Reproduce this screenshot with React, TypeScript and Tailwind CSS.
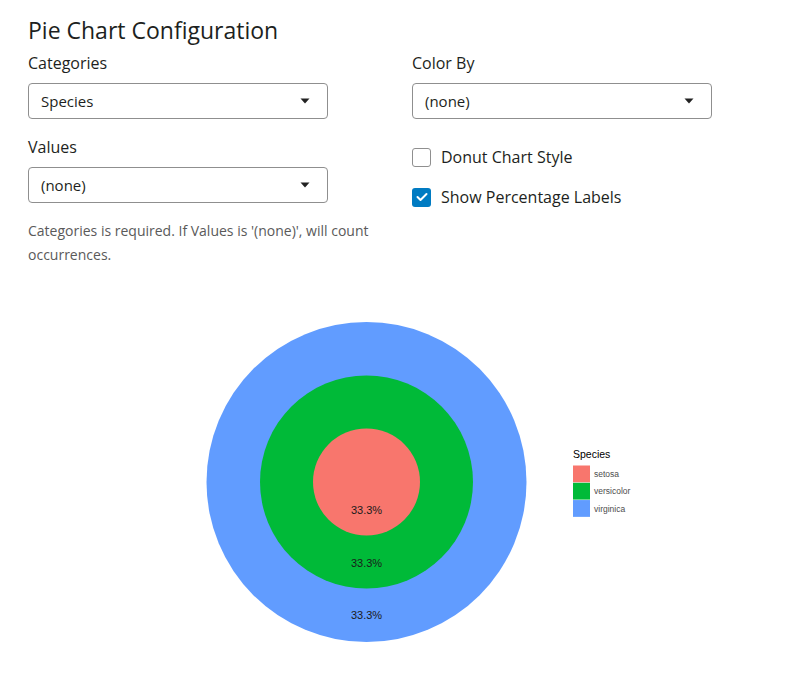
import React from 'react';

const FONT = { fontFamily: '"Open Sans", "Noto Sans", sans-serif' };

const SelectBox = ({ value }: { value: string }) => (
  <div className="w-[300px] h-9 border border-[#8f8f8f] rounded-[4px] bg-white flex items-center justify-between pl-[12px] pr-[17px] text-[15px] text-[#1d1f21]">
    <span>{value}</span>
    <svg width="10" height="6" viewBox="0 0 10 6">
      <path d="M0.5 0.5 L9.5 0.5 L5 5.5 Z" fill="#222" />
    </svg>
  </div>
);

const Field = ({ label, value }: { label: string; value: string }) => (
  <div className="flex flex-col mb-4">
    <label className="text-base leading-6 mb-2">{label}</label>
    <SelectBox value={value} />
  </div>
);

const Check = ({ label, checked }: { label: string; checked?: boolean }) => (
  <div className="flex items-center gap-[10px] h-6 mb-4">
    {checked ? (
      <div className="w-[19px] h-[19px] rounded-[3px] bg-[#007bc2] flex items-center justify-center">
        <svg width="12" height="10" viewBox="0 0 12 10">
          <path d="M1.5 5 L4.5 8 L10.5 2" stroke="white" strokeWidth="2" fill="none" strokeLinecap="round" strokeLinejoin="round" />
        </svg>
      </div>
    ) : (
      <div className="w-[19px] h-[19px] rounded-[3px] border border-[#8f8f8f] bg-white" />
    )}
    <span className="text-base leading-6">{label}</span>
  </div>
);

const PieChart = () => {
  const cx = 338.5;
  const cy = 199;
  const legend = [
    { name: 'setosa', color: '#F8766D' },
    { name: 'versicolor', color: '#00BA38' },
    { name: 'virginica', color: '#619CFF' },
  ];
  return (
    <svg width="744" height="400" viewBox="0 0 744 400" style={{ fontFamily: '"Liberation Sans", Arial, sans-serif' }}>
      <circle cx={cx} cy={cy} r={160} fill="#619CFF" />
      <circle cx={cx} cy={cy} r={106.5} fill="#00BA38" />
      <circle cx={cx} cy={cy} r={53.5} fill="#F8766D" />
      <text x={cx} y={231} textAnchor="middle" fontSize="11" fill="#1a1a1a">33.3%</text>
      <text x={cx} y={283.5} textAnchor="middle" fontSize="11" fill="#1a1a1a">33.3%</text>
      <text x={cx} y={336} textAnchor="middle" fontSize="11" fill="#1a1a1a">33.3%</text>

      <text x={545} y={175} fontSize="10.5" fill="#000">Species</text>
      {legend.map((l, i) => (
        <g key={l.name}>
          <rect x={545} y={182.5 + i * 17.28} width={17} height={16.8} fill={l.color} />
          <text x={566} y={194 + i * 17.28} fontSize="8.5" fill="#4d4d4d">{l.name}</text>
        </g>
      ))}
    </svg>
  );
};

export default function App() {
  return (
    <div className="bg-white min-h-screen px-[28px] pt-[16px] text-[#1d1f21]" style={FONT}>
      <h2 className="text-[23px] leading-[28px] mb-[7px]">Pie Chart Configuration</h2>
      <div className="grid grid-cols-[368px_1fr] gap-x-4">
        <div>
          <Field label="Categories" value="Species" />
          <Field label="Values" value="(none)" />
          <p className="text-sm leading-6 text-[#5a5a5a] mt-[9px] w-[350px]">
            Categories is required. If Values is '(none)', will count occurrences.
          </p>
        </div>
        <div>
          <Field label="Color By" value="(none)" />
          <div className="pt-[10px]">
            <Check label="Donut Chart Style" />
            <Check label="Show Percentage Labels" checked />
          </div>
        </div>
      </div>
      <div className="mt-[16px]">
        <PieChart />
      </div>
    </div>
  );
}
